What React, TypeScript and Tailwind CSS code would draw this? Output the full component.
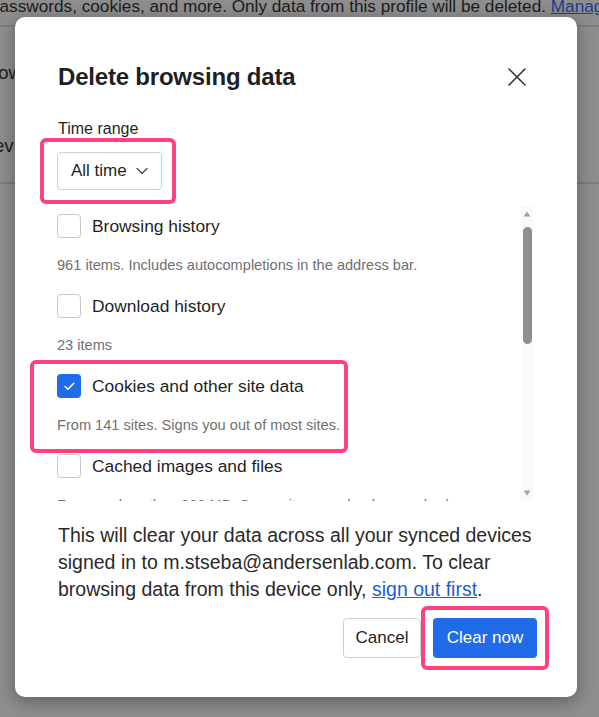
import { X, ChevronDown, Check } from "lucide-react";

const font = { fontFamily: '"Liberation Sans", Arial, sans-serif' };

type Item = { label: string; desc: string; checked?: boolean; marked?: boolean };

const items: Item[] = [
  { label: "Browsing history", desc: "961 items. Includes autocompletions in the address bar." },
  { label: "Download history", desc: "23 items" },
  { label: "Cookies and other site data", desc: "From 141 sites. Signs you out of most sites.", checked: true, marked: true },
  { label: "Cached images and files", desc: "Frees up less than 320 MB. Some sites may load more slowly on your next visit." },
];

const Checkbox = ({ checked }: { checked?: boolean }) =>
  checked ? (
    <div className="w-6 h-6 rounded-[4px] bg-[#1f6be8] flex items-center justify-center">
      <Check size={13} strokeWidth={3} className="text-white" />
    </div>
  ) : (
    <div className="w-6 h-6 rounded-[4px] border border-[#c8c8c8] bg-white" />
  );

const Row = ({ item }: { item: Item }) => (
  <div className="relative">
    {item.marked && (
      <div className="absolute -left-[27px] -top-[6px] -bottom-[7px] w-[318px] border-4 border-[#ff4081] rounded-[6px]" />
    )}
    <div className="h-10 flex items-center gap-[11px]">
      <Checkbox checked={item.checked} />
      <span className="text-[17.4px] text-[#1f1f1f]">{item.label}</span>
    </div>
    <div className="h-10 flex items-center text-[14.6px] text-[#707070] whitespace-nowrap">{item.desc}</div>
  </div>
);

export default function App() {
  return (
    <div className="relative w-[599px] h-[717px] overflow-hidden bg-[#8e8e8e]" style={font}>
      {/* page behind the scrim */}
      <div className="text-[#1c1c1c]">
        <div className="h-[30px] border-b-2 border-[#7c7c7c] -mt-[3px]">
          <div className="-ml-[10px] text-[17.2px] leading-[18px] whitespace-nowrap">
            passwords, cookies, and more. Only data from this profile will be deleted.{" "}
            <span className="text-[#1a3d8f] underline">Manage</span>
          </div>
        </div>
        <div className="h-[157px] border-b-2 border-[#7c7c7c] flex flex-col text-[19px] pt-[9px]">
          <div className="h-[74px] flex items-center -ml-[21px]">Browsing history</div>
          <div className="h-[72px] flex items-center -ml-[20px]">Devices</div>
        </div>
      </div>

      {/* dialog */}
      <div className="absolute left-[15px] top-[17px] w-[562px] h-[680px] bg-white rounded-[10px] shadow-[0_4px_18px_rgba(0,0,0,0.35)] flex flex-col pt-[44px]">
        <div className="flex items-center justify-between pl-[43px] pr-[44px] h-8">
          <h1 className="text-[24px] font-semibold text-[#1f1f1f] tracking-[-0.2px]">Delete browsing data</h1>
          <X size={32} strokeWidth={1.2} className="text-[#333]" />
        </div>

        <div className="pl-[43px] mt-[26px] text-[16px] leading-5 text-[#1f1f1f]">Time range</div>
        <div className="pl-[42px] mt-[13px]">
          <div className="relative w-[105px]">
            <div className="absolute -left-[17px] -right-[14px] -top-[14px] -bottom-[14px] border-4 border-[#ff4081] rounded-[6px]" />
            <div className="h-[38px] border border-[#d0d0d0] rounded-[4px] flex items-center pl-[13px] gap-[5px] text-[17px] text-[#1f1f1f]">
              All time
              <ChevronDown size={20} strokeWidth={1.4} className="text-[#444]" />
            </div>
          </div>
        </div>

        <div className="mt-[16px] h-[295px] flex">
          <div className="flex-1 overflow-hidden pl-[42px]">
            {items.map((it) => (
              <Row key={it.label} item={it} />
            ))}
          </div>
          <div className="w-[12px] mr-[44px] bg-[#fafafa] flex flex-col items-center py-[5px]">
            <svg width="8" height="6" viewBox="0 0 8 6">
              <path d="M4 0.5 L7.5 5.5 L0.5 5.5 Z" fill="#a3a3a3" />
            </svg>
            <div className="w-[9px] h-[117px] mt-[10px] rounded-full bg-[#8f8f8f]" />
            <div className="flex-1" />
            <svg width="8" height="6" viewBox="0 0 8 6">
              <path d="M0.5 0.5 L7.5 0.5 L4 5.5 Z" fill="#a3a3a3" />
            </svg>
          </div>
        </div>

        <p className="mt-[21px] pl-[43px] pr-[30px] text-[19.5px] leading-[27px] text-[#2a2a2a]">
          This will clear your data across all your synced devices signed in to m.stseba@andersenlab.com. To clear
          browsing data from this device only, <span className="text-[#1a5fd6] underline">sign out first</span>.
        </p>

        <div className="mt-[15px] flex justify-end gap-3 pr-[40px]">
          <button className="h-10 w-[78px] border border-[#cfcfcf] rounded-[4px] text-[17px] text-[#1f1f1f] bg-white">
            Cancel
          </button>
          <div className="relative">
            <div className="absolute -inset-[12px] border-4 border-[#ff4081] rounded-[6px]" />
            <button className="h-10 w-[104px] rounded-[4px] bg-[#1f6be8] text-white text-[17px]">Clear now</button>
          </div>
        </div>
      </div>
    </div>
  );
}
